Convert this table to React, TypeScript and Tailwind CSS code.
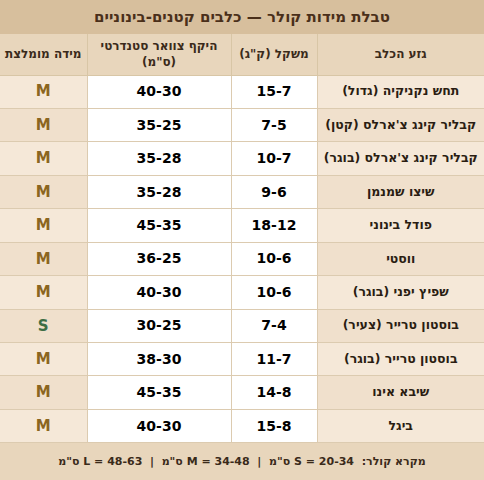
import React from "react"

const rows = [
  { breed: "תחש נקניקיה (גדול)", weight: "15-7", neck: "40-30", size: "M" },
  { breed: "קבליר קינג צ'ארלס (קטן)", weight: "7-5", neck: "35-25", size: "M" },
  { breed: "קבליר קינג צ'ארלס (בוגר)", weight: "10-7", neck: "35-28", size: "M" },
  { breed: "שיצו שמנמן", weight: "9-6", neck: "35-28", size: "M" },
  { breed: "פודל בינוני", weight: "18-12", neck: "45-35", size: "M" },
  { breed: "ווסטי", weight: "10-6", neck: "36-25", size: "M" },
  { breed: "שפיץ יפני (בוגר)", weight: "10-6", neck: "40-30", size: "M" },
  { breed: "בוסטון טרייר (צעיר)", weight: "7-4", neck: "30-25", size: "S" },
  { breed: "בוסטון טרייר (בוגר)", weight: "11-7", neck: "38-30", size: "M" },
  { breed: "שיבא אינו", weight: "14-8", neck: "45-35", size: "M" },
  { breed: "ביגל", weight: "15-8", neck: "40-30", size: "M" },
]

export default function App() {
  return (
    <main
      dir="rtl"
      className="h-[480px] w-[484px] overflow-hidden bg-[#e8d6bc] font-['DejaVu_Sans',sans-serif] font-bold"
    >
      <div className="flex h-[34px] items-center justify-center bg-[#d7bf9d] text-[15px] text-[#4a2f1a]">
        טבלת מידות קולר — כלבים קטנים-בינוניים
      </div>

      <table className="w-[484px] table-fixed border-collapse">
        <colgroup>
          <col className="w-[167px]" />
          <col className="w-[86px]" />
          <col className="w-[144px]" />
          <col className="w-[87px]" />
        </colgroup>
        <thead>
          <tr className="h-[41px] bg-[#e8d6bc] text-[12px] leading-[16px] text-[#3a2a1a]">
            <th className="border border-t-0 border-r-0 border-[#d8c6a6] font-bold">גזע הכלב</th>
            <th className="border border-t-0 border-[#d8c6a6] font-bold">משקל (ק"ג)</th>
            <th className="border border-t-0 border-[#d8c6a6] px-2 font-bold">
              היקף צוואר סטנדרטי
              <br />
              (ס"מ)
            </th>
            <th className="border border-t-0 border-l-0 border-[#d8c6a6] font-bold">מידה מומלצת</th>
          </tr>
        </thead>
        <tbody>
          {rows.map((r, i) => {
            const tint = i % 2 === 0 ? "bg-[#f5e8d8]" : "bg-[#f0e0cc]"
            return (
              <tr key={i} className="h-[33.45px]">
                <td className={`border border-r-0 border-[#dccbb0] text-center text-[12.5px] text-[#2a1d12] ${tint}`}>
                  {r.breed}
                </td>
                <td className="border border-[#dccbb0] bg-white text-center text-[14px] text-black">
                  {r.weight}
                </td>
                <td className="border border-[#dccbb0] bg-white text-center text-[14px] text-black">
                  {r.neck}
                </td>
                <td
                  className={`border border-l-0 border-[#dccbb0] text-center text-[15px] ${tint} ${
                    r.size === "S" ? "text-[#3d6e45]" : "text-[#8b6520]"
                  }`}
                >
                  {r.size}
                </td>
              </tr>
            )
          })}
        </tbody>
      </table>

      <div className="flex h-[37px] items-center justify-center text-[11px] text-[#3a2a1a]">
        מקרא קולר:&nbsp; S = 20-34 ס"מ &nbsp;|&nbsp; M = 34-48 ס"מ &nbsp;|&nbsp; L = 48-63 ס"מ
      </div>
    </main>
  )
}
